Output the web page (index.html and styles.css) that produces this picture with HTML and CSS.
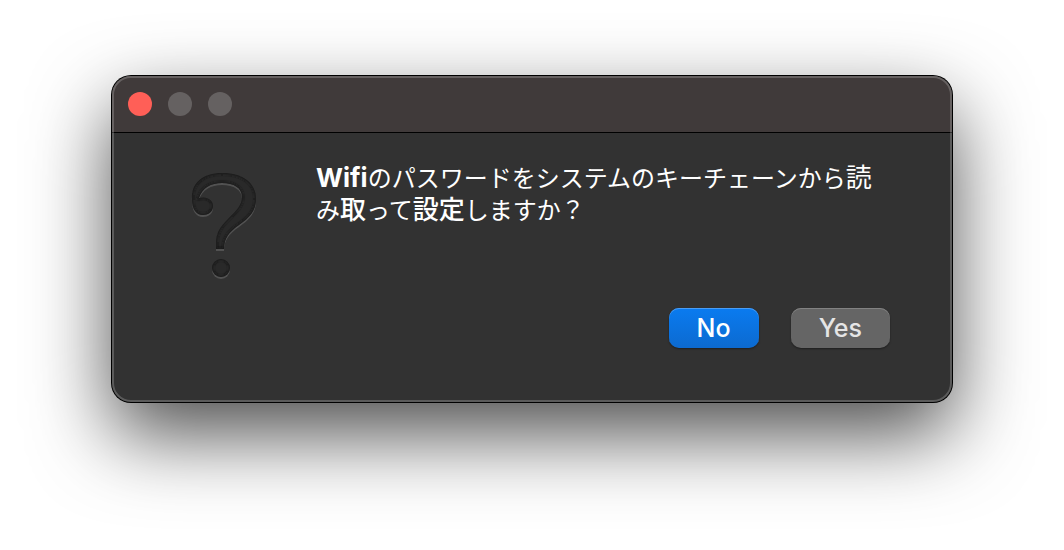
FILE: index.html
```html
<!DOCTYPE html>
<html lang="ja">
<head>
    <meta charset="UTF-8">
    <meta content="width=device-width, initial-scale=1.0" name="viewport">
    <title>Wifi</title>
    <link rel="stylesheet" href="styles.css">
</head>
<body>
<main class="window" role="dialog" aria-labelledby="message">
    <header class="titlebar">
        <button class="light close" type="button" aria-label="Close"></button>
        <button class="light" type="button" aria-label="Minimize" disabled></button>
        <button class="light" type="button" aria-label="Zoom" disabled></button>
    </header>
    <div class="content">
        <svg class="icon" viewBox="0 0 90 130" aria-hidden="true">
            <defs>
                <g id="mark">
                    <path d="M12 38C11 22 23 12 42 12C63 12 76 22 76 38C76 50 69 57 59 64C49 71 44 77 44 88L36 88L36 82C36 72 40 66 48 58C57 49 62 44 62 36C62 27 54 22 42 22C31 22 22 27 19 37C27 35 33 39 33 45C33 51 28 54 23 54C16 54 12 48 12 38Z"/>
                    <circle cx="41" cy="107" r="9"/>
                </g>
                <clipPath id="markClip">
                    <path d="M12 38C11 22 23 12 42 12C63 12 76 22 76 38C76 50 69 57 59 64C49 71 44 77 44 88L36 88L36 82C36 72 40 66 48 58C57 49 62 44 62 36C62 27 54 22 42 22C31 22 22 27 19 37C27 35 33 39 33 45C33 51 28 54 23 54C16 54 12 48 12 38Z"/>
                    <circle cx="41" cy="107" r="9"/>
                </clipPath>
                <filter id="soft"><feGaussianBlur stdDeviation="1"/></filter>
            </defs>
            <use href="#mark" class="mark-edge" y="2"/>
            <use href="#mark" class="mark-fill"/>
            <g clip-path="url(#markClip)">
                <use href="#mark" class="mark-shade" filter="url(#soft)"/>
            </g>
        </svg>
        <p class="message" id="message"><b>Wifi</b>のパスワードをシステムのキーチェーンから<span class="kanji">読</span>み<span class="kanji strong">取</span>って<span class="kanji strong">設定</span>しますか？</p>
    </div>
    <footer class="buttons">
        <button class="btn primary" type="button">No</button>
        <button class="btn" type="button">Yes</button>
    </footer>
</main>
</body>
</html>
```

FILE: styles.css
```css
body {
    min-height: 100vh;
    margin: 0;
    padding: 76px 112px;
    box-sizing: border-box;
    background-color: #fff;
    font-family: Inter, "Noto Sans CJK JP", sans-serif;
}

.window {
    position: relative;
    border-radius: 19px;
    background-color: #323232;
    box-shadow: 0 0 0 1px #000, 0 32px 80px rgba(0, 0, 0, 0.7);
}

/* Light rim just inside the window edge */
.window::after {
    content: "";
    position: absolute;
    inset: 0;
    border: 2px solid rgba(255, 255, 255, 0.2);
    border-radius: 19px;
    pointer-events: none;
}

.titlebar {
    display: flex;
    align-items: center;
    gap: 16px;
    height: 56px;
    padding: 0 16px;
    border-bottom: 1px solid #000;
    border-radius: 19px 19px 0 0;
    background-color: #403a3a;
}

.light {
    width: 24px;
    height: 24px;
    padding: 0;
    border: none;
    border-radius: 50%;
    background-color: #656161;
}

.close {
    background-color: #ff5f57;
}

.content {
    display: flex;
    gap: 46px;
    padding: 28px 76px 0 68px;
}

.icon {
    flex: none;
    width: 90px;
    height: 130px;
}

.mark-edge {
    fill: #525252;
}

.mark-fill {
    fill: #292929;
}

.mark-shade {
    fill: none;
    stroke: #1b1b1b;
    stroke-width: 3px;
}

.message {
    margin: 0;
    padding-top: 2px;
    color: #fff;
    font-size: 24px;
    line-height: 32px;
    word-break: break-all;
}

.message b {
    font-size: 26px;
    line-height: 1;
}

.kanji {
    font-size: 26px;
    line-height: 1;
}

.strong {
    font-weight: 500;
}

.buttons {
    display: flex;
    justify-content: flex-end;
    gap: 32px;
    padding: 17px 62px 54px;
}

.btn {
    height: 40px;
    padding: 0 28px;
    border: none;
    border-radius: 10px;
    background-color: #656565;
    color: #e5e5e5;
    font-family: inherit;
    font-size: 25px;
    font-weight: 500;
    line-height: 38px;
    box-shadow: inset 0 1px 0 #828282, 0 1px 2px rgba(0, 0, 0, 0.4);
}

.primary {
    background: linear-gradient(#0a7bf0, #0c6ad0);
    color: #fff;
    box-shadow: inset 0 1px 0 #4a9df4, 0 1px 2px rgba(0, 0, 0, 0.4);
}
```
